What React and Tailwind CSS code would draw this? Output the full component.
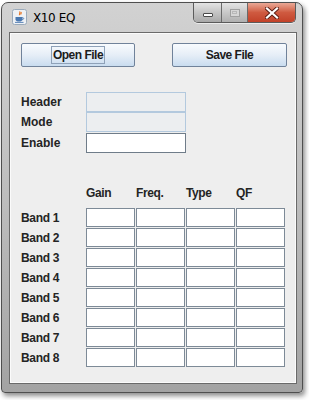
import React from 'react';

const bands = ['Band 1', 'Band 2', 'Band 3', 'Band 4', 'Band 5', 'Band 6', 'Band 7', 'Band 8'];
const columns = ['Gain', 'Freq.', 'Type', 'QF'];

function JavaIcon() {
  return (
    <svg width="15" height="16" viewBox="0 0 15 16">
      <rect x="0.5" y="0.5" width="14" height="15" rx="2" fill="#eef1f5" stroke="#9aaabb" />
      <path d="M7.5 2.5c1.5 1.2-1 2.2.3 3.6 M9 3.2c.8.8-.6 1.4.2 2.3" stroke="#e8792a" strokeWidth="1.2" fill="none" />
      <path d="M3.5 8h7v2.2c0 1.6-1.4 2.4-3.5 2.4s-3.5-.8-3.5-2.4z" fill="#4a78b0" />
      <path d="M10.5 8.6c1.6 0 1.6 2-0.3 2" stroke="#4a78b0" strokeWidth="0.9" fill="none" />
      <path d="M3 13.4h8.5" stroke="#4a78b0" strokeWidth="0.9" />
    </svg>
  );
}

function TitleButtons() {
  return (
    <div className="flex h-[20px] border border-t-0 border-[#5b5b5b] rounded-b-[5px] overflow-hidden shadow-[0_1px_0_rgba(255,255,255,0.6)]">
      <div className="w-[28px] flex items-center justify-center bg-gradient-to-b from-[#e4e4e4] via-[#c4c4c4] to-[#a9a9a9] border-r border-[#6a6a6a]">
        <div className="w-[10px] h-[4px] mt-[5px] bg-white border border-[#4a4a4a] rounded-[1px]" />
      </div>
      <div className="w-[26px] flex items-center justify-center bg-gradient-to-b from-[#e4e4e4] via-[#c8c8c8] to-[#b0b0b0] border-r border-[#6a6a6a]">
        <div className="w-[10px] h-[8px] border border-[#a0a0a0] bg-[#d6d6d6] flex items-center justify-center">
          <div className="w-[5px] h-[3px] border border-[#b8b8b8]" />
        </div>
      </div>
      <div className="w-[47px] flex items-center justify-center bg-gradient-to-b from-[#e9a896] via-[#cf5a40] to-[#c24128]">
        <svg width="14" height="12" viewBox="0 0 14 12">
          <path d="M2 1.5l10 9 M12 1.5l-10 9" stroke="#5a1d12" strokeWidth="4" strokeLinecap="square" />
          <path d="M2 1.5l10 9 M12 1.5l-10 9" stroke="#ffffff" strokeWidth="2.2" strokeLinecap="square" />
        </svg>
      </div>
    </div>
  );
}

function Field({ disabled }) {
  return (
    <div
      className={`w-[100px] h-[20px] border ${
        disabled ? 'border-[#b3c9de] bg-[#eceef0]' : 'border-[#6f7c89] bg-white'
      }`}
    />
  );
}

function JButton({ label, focused, width }) {
  return (
    <div
      className={`${width} h-[24px] border border-[#70829a] rounded-[2px] bg-gradient-to-b from-[#f8fbfe] via-[#e6eef7] to-[#c9dcef] flex items-center justify-center text-[12px] font-bold tracking-[-0.5px] text-[#1c1c1c]`}
    >
      <span className={focused ? 'border border-[#8ea1b8] px-[1px] leading-[16px]' : 'leading-[16px]'}>
        {label}
      </span>
    </div>
  );
}

export default function App() {
  return (
    <div className="w-[309px] h-[400px] bg-white overflow-hidden font-['Liberation_Sans',Arial,sans-serif] text-[#242424]">
      <div className="ml-[1px] mt-[2px] w-[302px] h-[391px] rounded-t-[7px] rounded-b-[4px] border border-[#4f4f4f] bg-gradient-to-b from-[#d2d2d2] via-[#bdbdbd] to-[#a3a3a3] shadow-[2px_3px_5px_rgba(0,0,0,0.45)] flex flex-col pl-[7px] pr-[5px] pb-[8px]">
        {/* Title bar */}
        <div className="h-[29px] flex items-start shrink-0">
          <div className="mt-[6px] ml-[3px]">
            <JavaIcon />
          </div>
          <div className="mt-[8px] ml-[6px] text-[12px] leading-[14px] text-black font-['DejaVu_Sans',sans-serif] tracking-[-0.4px]">X10 EQ</div>
          <div className="flex-1" />
          <div className="mr-[1px]">
            <TitleButtons />
          </div>
        </div>

        {/* Client area */}
        <div className="flex-1 border border-[#6a6a6a] bg-[#eeeeee] shadow-[inset_0_0_0_1px_#fbfbfb] pl-[11px] pr-[9px] pt-[10px] flex flex-col">
          <div className="flex justify-between">
            <JButton label="Open File" focused width="w-[114px]" />
            <JButton label="Save File" width="w-[115px]" />
          </div>

          <div className="mt-[25px] flex flex-col text-[12px] font-bold">
            <div className="flex items-center">
              <div className="w-[65px]">Header</div>
              <Field disabled />
            </div>
            <div className="flex items-center">
              <div className="w-[65px]">Mode</div>
              <Field disabled />
            </div>
            <div className="flex items-center mt-[1px]">
              <div className="w-[65px]">Enable</div>
              <Field />
            </div>
          </div>

          <div className="mt-[32px] flex text-[12px] tracking-[-0.4px] font-bold leading-[16px]">
            <div className="w-[65px]" />
            {columns.map((c) => (
              <div key={c} className="w-[50px]">{c}</div>
            ))}
          </div>

          <div className="mt-[7px] flex flex-col gap-[1px] text-[12px] tracking-[-0.3px] font-bold">
            {bands.map((b) => (
              <div key={b} className="flex items-center h-[19px]">
                <div className="w-[65px]">{b}</div>
                <div className="flex gap-[1px]">
                  {columns.map((c) => (
                    <div key={c} className="w-[49px] h-[19px] border border-[#7d8a97] bg-white" />
                  ))}
                </div>
              </div>
            ))}
          </div>
        </div>
      </div>
    </div>
  );
}
